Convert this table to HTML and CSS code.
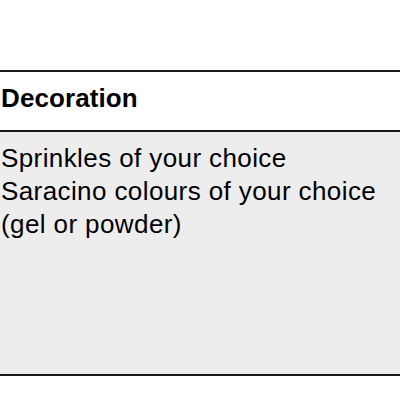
FILE: index.html
```html
<!DOCTYPE html>
<html>
<head>
<meta charset="utf-8">
<link rel="stylesheet" href="styles.css">
</head>
<body>
<div class="page">
  <section class="table">
    <div class="head">Decoration</div>
    <div class="cell">
      <div class="line">Sprinkles of your choice</div>
      <div class="line">Saracino colours of your choice</div>
      <div class="line">(gel or powder)</div>
    </div>
  </section>
</div>
</body>
</html>
```
FILE: styles.css
```css
html, body {
  margin: 0;
  padding: 0;
  background: #ffffff;
}
.page {
  width: 400px;
  height: 400px;
  padding-top: 70px;
  box-sizing: border-box;
  font-family: "Liberation Sans", Arial, sans-serif;
  color: #000;
}
.table {
  border-top: 2px solid #1a1a1a;
  border-bottom: 2px solid #1a1a1a;
}
.head {
  height: 60px;
  box-sizing: border-box;
  padding: 12px 1px 0;
  font-weight: bold;
  font-size: 26px;
  line-height: 28px;
  letter-spacing: 0.1px;
  border-bottom: 2px solid #1a1a1a;
}
.cell {
  background: #ededed;
  height: 242px;
  box-sizing: border-box;
  padding: 10px 1px 0;
  font-size: 26px;
  line-height: 33px;
  letter-spacing: 0.4px;
}
```
